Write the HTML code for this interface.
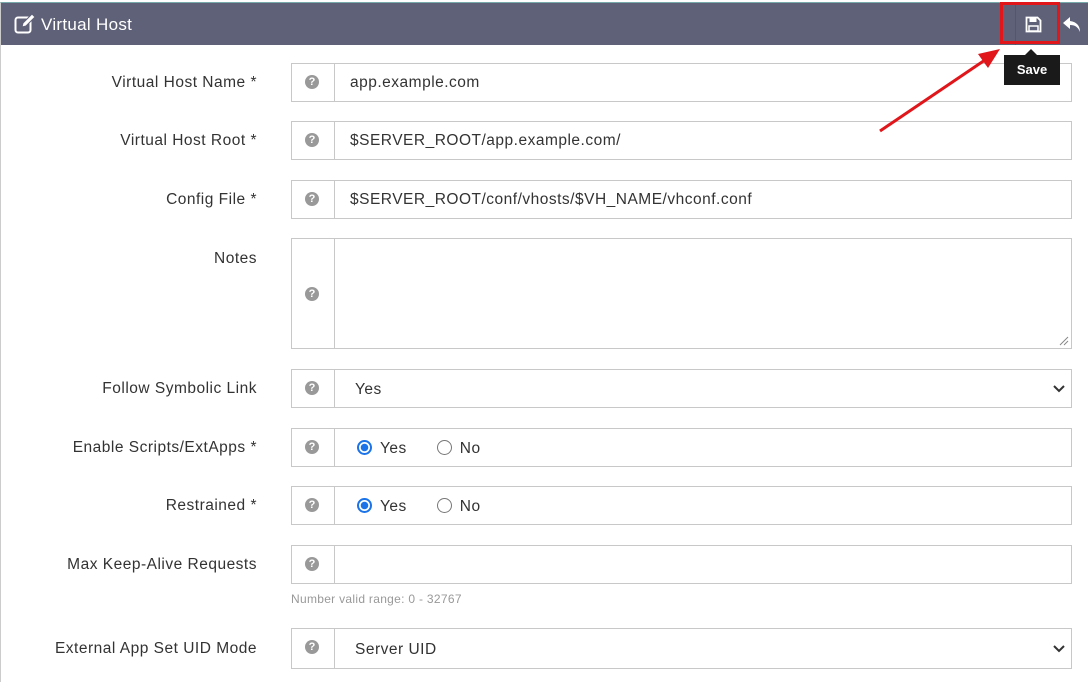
<!DOCTYPE html>
<html><head><style>
*{box-sizing:border-box;margin:0;padding:0}
body{width:1088px;height:676px;background:#fff;font-family:"Liberation Sans",sans-serif;color:#333;position:relative;overflow:hidden}
.frame{position:absolute;left:0;top:2px;width:1088px;height:680px;border-left:1px solid #ccc;border-top:1px solid #7aa}
.hdr{position:absolute;left:1px;top:3px;width:1087px;height:42px;background:#5f6178;color:#fff;font-size:17px;letter-spacing:0.3px}
.hdr .t{position:absolute;left:40px;top:12px}
.lbl{position:absolute;right:831px;font-size:15.5px;letter-spacing:0.5px;color:#333;text-align:right;white-space:nowrap}
.box{position:absolute;left:291px;width:781px;border:1px solid #c8c8c8;background:#fff}
.help{position:absolute;left:0;top:0;bottom:0;width:43px;border-right:1px solid #c8c8c8}
.help i{position:absolute;left:13px;width:14px;height:14px;border-radius:50%;background:#999;color:#fff;font-size:11px;font-weight:bold;font-style:normal;text-align:center;line-height:14px;letter-spacing:0}
.val{position:absolute;left:58px;font-size:15.5px;letter-spacing:0.5px;color:#333;white-space:nowrap}
.radio{display:inline-block;width:15px;height:15px;border-radius:50%;border:1px solid #777;vertical-align:-2px;margin-right:8px}
.radio.on{border:2px solid #1a73e8;background:radial-gradient(circle,#1a73e8 0 3.5px,#fff 4px)}
</style></head><body>
<div class="frame"></div>
<div class="hdr">
<svg style="position:absolute;left:13px;top:10px" width="22" height="22" viewBox="0 0 22 22"><rect x="1.5" y="4.5" width="15" height="15" rx="2.5" fill="none" stroke="#fff" stroke-width="2"/><path d="M8 14l1-4 9-9 3 3-9 9z" fill="#fff" stroke="#5f6178" stroke-width="1"/></svg>
<span class="t">Virtual Host</span>
<div style="position:absolute;left:1014px;top:0;width:1px;height:42px;background:#55566b"></div>
<svg style="position:absolute;left:1024px;top:13px" width="17" height="17" viewBox="0 0 17 17"><path d="M1.5 1.5h11l3 3v11h-14z" fill="none" stroke="#fff" stroke-width="1.8"/><rect x="4.5" y="2" width="7" height="4" fill="#fff"/><rect x="4" y="10" width="9" height="5" fill="none" stroke="#fff" stroke-width="1.5"/></svg>
<svg style="position:absolute;left:1061px;top:13px" width="20" height="18" viewBox="0 0 20 18"><path d="M8 1L1 7l7 6V9c5 0 8 2 10 7 0-6-3-10-10-11z" fill="#fff"/></svg>
</div>
<div style="position:absolute;left:1000px;top:2px;width:60px;height:42px;border:3px solid #e0161b"></div>

<div class="lbl" style="top:74px">Virtual Host Name *</div>
<div class="box" style="top:63px;height:39px"><div class="help"><i style="top:11px">?</i></div><div class="val" style="top:10px">app.example.com</div></div>
<div class="lbl" style="top:132px">Virtual Host Root *</div>
<div class="box" style="top:121px;height:39px"><div class="help"><i style="top:11px">?</i></div><div class="val" style="top:10px">$SERVER_ROOT/app.example.com/</div></div>
<div class="lbl" style="top:191px">Config File *</div>
<div class="box" style="top:180px;height:39px"><div class="help"><i style="top:11px">?</i></div><div class="val" style="top:10px">$SERVER_ROOT/conf/vhosts/$VH_NAME/vhconf.conf</div></div>
<div class="lbl" style="top:250px">Notes</div>
<div class="box" style="top:238px;height:111px"><div class="help"><i style="top:48px">?</i></div><svg style="position:absolute;right:2px;bottom:2px" width="10" height="10"><path d="M9 1L1 9M9 5L5 9" stroke="#888"/></svg></div>
<div class="lbl" style="top:380px">Follow Symbolic Link</div>
<div class="box" style="top:369px;height:39px"><div class="help"><i style="top:11px">?</i></div><div class="val" style="top:11px;left:63px">Yes</div><svg style="position:absolute;right:6px;top:14px" width="12" height="10"><path d="M1 2l5 5 5-5" fill="none" stroke="#333" stroke-width="2"/></svg></div>
<div class="lbl" style="top:439px">Enable Scripts/ExtApps *</div>
<div class="box" style="top:428px;height:39px"><div class="help"><i style="top:11px">?</i></div><div class="val" style="top:11px;left:65px"><span class="radio on"></span>Yes<span style="display:inline-block;width:30px"></span><span class="radio"></span>No</div></div>
<div class="lbl" style="top:497px">Restrained *</div>
<div class="box" style="top:486px;height:39px"><div class="help"><i style="top:11px">?</i></div><div class="val" style="top:11px;left:65px"><span class="radio on"></span>Yes<span style="display:inline-block;width:30px"></span><span class="radio"></span>No</div></div>
<div class="lbl" style="top:556px">Max Keep-Alive Requests</div>
<div class="box" style="top:545px;height:39px"><div class="help"><i style="top:11px">?</i></div></div>
<div style="position:absolute;left:291px;top:592px;font-size:12px;letter-spacing:0.3px;color:#999">Number valid range: 0 - 32767</div>
<div class="lbl" style="top:640px">External App Set UID Mode</div>
<div class="box" style="top:628px;height:41px"><div class="help"><i style="top:11px">?</i></div><div class="val" style="top:12px;left:63px">Server UID</div><svg style="position:absolute;right:6px;top:15px" width="12" height="10"><path d="M1 2l5 5 5-5" fill="none" stroke="#333" stroke-width="2"/></svg></div>

<div style="position:absolute;left:1004px;top:55px;width:56px;height:30px;background:#1a1a1a;color:#fff;font-size:13px;font-weight:bold;text-align:center;line-height:30px">Save</div>
<div style="position:absolute;left:1025px;top:49px;border:6px solid transparent;border-bottom-color:#1a1a1a;border-top:0"></div>
<svg style="position:absolute;left:0;top:0" width="1088" height="676"><line x1="880" y1="131" x2="985" y2="60" stroke="#e0161b" stroke-width="3"/><path d="M1000 49l-22 5 10 14z" fill="#e0161b"/></svg>
</body></html>
